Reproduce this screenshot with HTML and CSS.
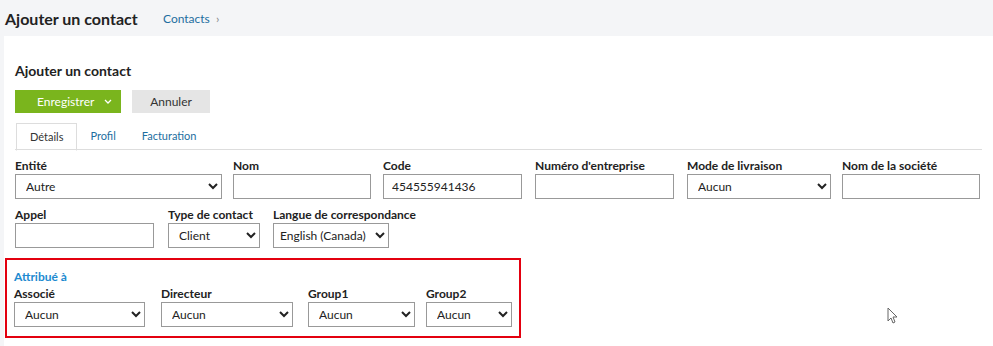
FILE: index.html
```html
<!DOCTYPE html>
<html lang="fr">
<head>
    <title>Ajouter un contact</title>
    <link rel="stylesheet" href="styles.css">
</head>
<body>
    <div class="topbar">
        <h1>Ajouter un contact</h1>
        <span class="crumb">Contacts <span class="crumb-sep">&rsaquo;</span></span>
    </div>

    <div class="panel">
        <h2>Ajouter un contact</h2>

        <div class="actions">
            <button type="button" class="btn btn-save">Enregistrer <svg width="8" height="5" viewBox="0 0 8 5"><path d="M1 1l3 3 3-3" fill="none" stroke="#fff" stroke-width="1.3"/></svg></button>
            <button type="button" class="btn btn-cancel">Annuler</button>
        </div>

        <div class="tabs">
            <span class="tab active">Détails</span>
            <span class="tab">Profil</span>
            <span class="tab">Facturation</span>
        </div>

        <div class="row">
            <div class="field f-218">
                <label>Entité</label>
                <select class="w-207"><option>Autre</option></select>
            </div>
            <div class="field f-150">
                <label>Nom</label>
                <input type="text" class="w-138">
            </div>
            <div class="field f-152">
                <label>Code</label>
                <input type="text" class="w-139" value="454555941436">
            </div>
            <div class="field f-152">
                <label>Numéro d'entreprise</label>
                <input type="text" class="w-139">
            </div>
            <div class="field f-155">
                <label>Mode de livraison</label>
                <select class="w-144"><option>Aucun</option></select>
            </div>
            <div class="field">
                <label>Nom de la société</label>
                <input type="text" class="w-138">
            </div>
        </div>

        <div class="row">
            <div class="field f-153">
                <label>Appel</label>
                <input type="text" class="w-139">
            </div>
            <div class="field f-105">
                <label>Type de contact</label>
                <select class="w-92"><option>Client</option></select>
            </div>
            <div class="field">
                <label>Langue de correspondance</label>
                <select class="w-116 narrow"><option>English (Canada)</option></select>
            </div>
        </div>

        <div class="assigned">
            <div class="assigned-title">Attribué à</div>
            <div class="row tight">
                <div class="field f-147">
                    <label>Associé</label>
                    <select class="w-131"><option>Aucun</option></select>
                </div>
                <div class="field f-147">
                    <label>Directeur</label>
                    <select class="w-132"><option>Aucun</option></select>
                </div>
                <div class="field f-118">
                    <label>Group1</label>
                    <select class="w-107"><option>Aucun</option></select>
                </div>
                <div class="field">
                    <label>Group2</label>
                    <select class="w-86"><option>Aucun</option></select>
                </div>
            </div>
        </div>
    </div>

    <svg class="cursor" width="12" height="17" viewBox="0 0 12 17"><path d="M1 1v13l3-3 2 5 2-1-2-5h4z" fill="#fff" stroke="#666" stroke-width="1"/></svg>
</body>
</html>
```

FILE: styles.css
```css
body {
    margin: 0;
    padding: 0;
    background-color: #f4f5f7;
    font-family: Lato, "Noto Sans", sans-serif;
    color: #222;
    overflow: hidden;
}

.topbar {
    display: flex;
    align-items: center;
    height: 36px;
    padding-left: 5px;
}

.topbar h1 {
    margin: 0;
    font-size: 16px;
    font-weight: bold;
    color: #222;
    width: 158px;
}

.crumb {
    font-size: 12px;
    color: #1d6ea0;
}

.crumb-sep {
    color: #888;
    margin-left: 3px;
}

.panel {
    margin-left: 4px;
    background-color: #fff;
    padding: 26px 11px 0 11px;
    height: 310px;
    box-sizing: border-box;
}

.panel h2 {
    margin: 0 0 11px 0;
    font-size: 14px;
    font-weight: bold;
}

.actions {
    display: flex;
    gap: 11px;
}

.btn {
    height: 23px;
    border: none;
    font-family: inherit;
    font-size: 12px;
    padding: 0;
}

.btn-save {
    width: 106px;
    background-color: #7ab51d;
    color: #fff;
    display: flex;
    align-items: center;
    padding-left: 22px;
    gap: 10px;
}

.btn-cancel {
    width: 78px;
    background-color: #e5e5e5;
    color: #333;
}

.tabs {
    display: flex;
    margin-top: 10px;
    border-bottom: 1px solid #ddd;
    height: 26px;
}

.tab {
    font-size: 11px;
    color: #1d6ea0;
    padding: 0 13px;
    line-height: 26px;
}

.tab.active {
    color: #333;
    margin-left: 1px;
    border: 1px solid #ddd;
    border-bottom: 1px solid #fff;
    height: 26px;
    line-height: 25px;
}

.row {
    display: flex;
    margin-top: 8px;
}

.field label {
    display: block;
    font-size: 12px;
    font-weight: bold;
    margin-bottom: 1px;
}

.f-218 { width: 218px; }
.f-150 { width: 150px; }
.f-152 { width: 152px; }
.f-155 { width: 155px; }
.f-153 { width: 153px; }
.f-105 { width: 105px; }
.f-147 { width: 147px; }
.f-118 { width: 118px; }

input, select {
    box-sizing: border-box;
    height: 25px;
    border: 1px solid #999;
    border-radius: 0;
    font-family: inherit;
    font-size: 12px;
    color: #222;
    background-color: #fff;
}

input {
    padding: 0 8px;
}

select {
    padding: 0 6px;
}

select.narrow {
    padding: 0 2px;
}

.w-207 { width: 207px; }
.w-138 { width: 138px; }
.w-139 { width: 139px; }
.w-144 { width: 144px; }
.w-92 { width: 92px; }
.w-116 { width: 116px; }
.w-131 { width: 131px; }
.w-132 { width: 132px; }
.w-107 { width: 107px; }
.w-86 { width: 86px; }

.assigned {
    margin: 10px 0 0 -10px;
    width: 516px;
    height: 80px;
    box-sizing: border-box;
    border: 2px solid #e3000f;
    padding: 9px 0 0 7px;
}

.assigned-title {
    font-size: 12px;
    font-weight: bold;
    color: #1d8ad0;
}

.row.tight {
    margin-top: 2px;
}

.cursor {
    position: absolute;
    left: 887px;
    top: 307px;
}
```
